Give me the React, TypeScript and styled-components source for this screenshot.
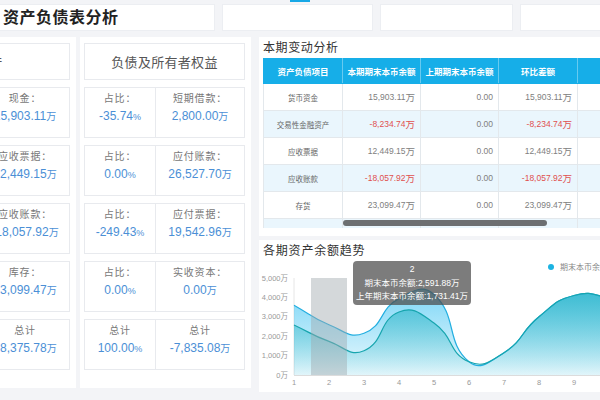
import React from 'react'
import styled, { createGlobalStyle } from 'styled-components'

const GlobalStyle = createGlobalStyle`
  html, body {
    margin: 0;
    padding: 0;
  }
  body {
    background: #f3f4f7;
    font-family: "Liberation Sans", "Noto Sans CJK SC", sans-serif;
  }
`

const Page = styled.div`
  width: 600px;
  height: 400px;
  overflow: hidden;
  background: #f3f4f7;
`
const Strip = styled.div`
  height: 4px;
  display: flex;
`
const StripMark = styled.div`
  margin-left: 290px;
  width: 20px;
  height: 2px;
  background: #18a8e6;
`
const TopBar = styled.div`
  display: flex;
  gap: 7px;
  height: 27px;
  margin-left: -7px;
`
const TitleBox = styled.div`
  width: 222px;
  flex-shrink: 0;
  box-sizing: border-box;
  background: #fff;
  border: 1px solid #eceef2;
  padding-left: 9px;
  font-size: 16px;
  font-weight: bold;
  line-height: 25px;
  letter-spacing: 0.5px;
  color: #222;
`
const BlankBox = styled.div<{ $w: number }>`
  width: ${(p) => p.$w}px;
  flex-shrink: 0;
  box-sizing: border-box;
  background: #fff;
  border: 1px solid #eceef2;
`
const Main = styled.div`
  display: flex;
  gap: 8px;
  margin-top: 6px;
  margin-left: -95px;
`
const LeftGroup = styled.div`
  display: flex;
  gap: 4px;
  flex-shrink: 0;
`
const Panel = styled.div`
  width: 171px;
  height: 351px;
  box-sizing: border-box;
  background: #fff;
  padding: 6px 6px 0 4px;
`
const HeaderBox = styled.div`
  height: 37px;
  box-sizing: border-box;
  border: 1px solid #e8eaee;
  display: flex;
  align-items: center;
  justify-content: center;
  font-size: 13px;
  letter-spacing: 0.3px;
  color: #555;
`
const Rows = styled.div`
  display: flex;
  flex-direction: column;
  gap: 7px;
  margin-top: 7px;
`
const Row = styled.div<{ $cols: string }>`
  display: grid;
  grid-template-columns: ${(p) => p.$cols};
  height: 51px;
  box-sizing: border-box;
  border: 1px solid #e8eaee;
`
const Cell = styled.div`
  text-align: center;
  padding-top: 3px;
  & + & {
    border-left: 1px solid #e8eaee;
  }
`
const Label = styled.div`
  font-size: 10px;
  line-height: 16px;
  letter-spacing: 0.8px;
  color: #777;
`
const Value = styled.div`
  font-size: 12px;
  line-height: 18px;
  color: #4b8fd6;
`
const Unit = styled.span<{ $size: number }>`
  font-size: ${(p) => p.$size}px;
`

const RightCol = styled.div`
  width: 360px;
  flex-shrink: 0;
  display: flex;
  flex-direction: column;
  gap: 4px;
`
const TablePanel = styled.div`
  height: 199px;
  box-sizing: border-box;
  background: #fff;
  padding: 4px 0 0 4px;
`
const SectionTitle = styled.div`
  font-size: 12px;
  line-height: 15px;
  letter-spacing: 0.6px;
  color: #333;
  margin-bottom: 2px;
`
const TableWrap = styled.div`
  position: relative;
  height: 170px;
  overflow: hidden;
`
const TRow = styled.div<{ $alt?: boolean; $head?: boolean }>`
  display: grid;
  grid-template-columns: 79px 78px 78px 79px 79px;
  height: ${(p) => (p.$head ? 26 : 27)}px;
  box-sizing: border-box;
  background: ${(p) => (p.$head ? '#16aee8' : p.$alt ? '#eaf6fd' : '#fff')};
  border-bottom: 1px solid ${(p) => (p.$head ? '#16aee8' : '#e3e8ec')};
  border-left: 1px solid ${(p) => (p.$head ? '#16aee8' : '#e3e8ec')};
`
const TH = styled.div`
  display: flex;
  align-items: center;
  justify-content: center;
  font-size: 8.5px;
  font-weight: bold;
  color: #fff;
  border-right: 1px solid rgba(255, 255, 255, 0.35);
`
const TD = styled.div<{ $num?: boolean; $neg?: boolean }>`
  display: flex;
  align-items: center;
  justify-content: ${(p) => (p.$num ? 'flex-end' : 'center')};
  padding-right: ${(p) => (p.$num ? 5 : 0)}px;
  font-size: ${(p) => (p.$num ? 8.5 : 7.5)}px;
  color: ${(p) => (p.$neg ? '#e0504f' : p.$num ? '#808080' : '#666')};
  border-right: 1px solid #e3e8ec;
`
const ScrollThumb = styled.div`
  position: absolute;
  left: 80px;
  top: 162px;
  width: 204px;
  height: 6px;
  border-radius: 3px;
  background: #6d6f71;
`

const ChartPanel = styled.div`
  height: 152px;
  box-sizing: border-box;
  background: #fff;
`
const ChartTitle = styled.div`
  padding: 3px 0 0 4px;
  font-size: 12px;
  line-height: 16px;
  letter-spacing: 0.8px;
  color: #333;
`
const ChartBox = styled.div`
  position: relative;
  height: 133px;
  overflow: hidden;
`
const Tooltip = styled.div`
  position: absolute;
  left: 94px;
  top: 2px;
  width: 118px;
  height: 44px;
  box-sizing: border-box;
  padding-top: 2px;
  border-radius: 4px;
  background: rgba(78, 78, 78, 0.74);
  color: #fff;
  font-size: 8.5px;
  line-height: 13.5px;
  text-align: center;
  white-space: nowrap;
`

type Item = { label: string; value: string; unit: string }
type PanelData = { title: string; cols: string; rows: [Item, Item][] }

const assets: PanelData = {
  title: '资产',
  cols: '70px 1fr',
  rows: [
    [{ label: '占比：', value: '-20.35', unit: '%' }, { label: '现金：', value: '15,903.11', unit: '万' }],
    [{ label: '占比：', value: '32.44', unit: '%' }, { label: '应收票据：', value: '12,449.15', unit: '万' }],
    [{ label: '占比：', value: '-47.06', unit: '%' }, { label: '应收账款：', value: '-18,057.92', unit: '万' }],
    [{ label: '占比：', value: '60.19', unit: '%' }, { label: '库存：', value: '23,099.47', unit: '万' }],
    [{ label: '总计', value: '100.00', unit: '%' }, { label: '总计', value: '28,375.78', unit: '万' }],
  ],
}

const liabilities: PanelData = {
  title: '负债及所有者权益',
  cols: '70px 1fr',
  rows: [
    [{ label: '占比：', value: '-35.74', unit: '%' }, { label: '短期借款：', value: '2,800.00', unit: '万' }],
    [{ label: '占比：', value: '0.00', unit: '%' }, { label: '应付账款：', value: '26,527.70', unit: '万' }],
    [{ label: '占比：', value: '-249.43', unit: '%' }, { label: '应付票据：', value: '19,542.96', unit: '万' }],
    [{ label: '占比：', value: '0.00', unit: '%' }, { label: '实收资本：', value: '0.00', unit: '万' }],
    [{ label: '总计', value: '100.00', unit: '%' }, { label: '总计', value: '-7,835.08', unit: '万' }],
  ],
}

const StatPanel = ({ data }: { data: PanelData }) => (
  <Panel>
    <HeaderBox>{data.title}</HeaderBox>
    <Rows>
      {data.rows.map((row, i) => (
        <Row key={i} $cols={data.cols}>
          {row.map((item, j) => (
            <Cell key={j}>
              <Label>{item.label}</Label>
              <Value>
                {item.value}
                <Unit $size={item.unit === '%' ? 9 : 10}>{item.unit}</Unit>
              </Value>
            </Cell>
          ))}
        </Row>
      ))}
    </Rows>
  </Panel>
)

const tableRows = [
  ['货币资金', '15,903.11', '15,903.11'],
  ['交易性金融资产', '-8,234.74', '-8,234.74'],
  ['应收票据', '12,449.15', '12,449.15'],
  ['应收账款', '-18,057.92', '-18,057.92'],
  ['存货', '23,099.47', '23,099.47'],
]

const Money = ({ v }: { v: string }) => (
  <TD $num $neg={v.startsWith('-')}>
    {v}
    <Unit $size={9.5}>万</Unit>
  </TD>
)

// chart geometry, in svg coords
const X0 = 35
const STEP = 35
const Y0 = 116
const PER = 97 / 5000
const upper = [3600, 2592, 2150, 3950, 4150, 680, 1150, 3000, 4100, 3950, 3200]
const lower = [2580, 1731, 1250, 3250, 2680, 680, 1150, 3000, 4100, 3950, 3200]

const toPts = (vals: number[]) => vals.map((v, i) => [X0 + i * STEP, Y0 - v * PER])

const smoothLine = (p: number[][], smooth = 0.5) => {
  const n = p.length
  const c0: number[][] = []
  const c1: number[][] = []
  for (let i = 0; i < n; i++) {
    const prev = p[Math.max(i - 1, 0)]
    const next = p[Math.min(i + 1, n - 1)]
    const cur = p[i]
    const vx = next[0] - prev[0]
    const vy = next[1] - prev[1]
    const d0 = Math.hypot(cur[0] - prev[0], cur[1] - prev[1])
    const d1 = Math.hypot(next[0] - cur[0], next[1] - cur[1])
    const r = d0 + d1 === 0 ? 0.5 : d1 / (d0 + d1)
    c1.push([cur[0] + vx * smooth * r, cur[1] + vy * smooth * r])
    c0.push([cur[0] - vx * smooth * (1 - r), cur[1] - vy * smooth * (1 - r)])
  }
  let d = `M${p[0][0]},${p[0][1]}`
  for (let i = 1; i < n; i++) {
    d += ` C${c1[i - 1][0].toFixed(2)},${c1[i - 1][1].toFixed(2)} ${c0[i][0].toFixed(2)},${c0[i][1].toFixed(2)} ${p[i][0]},${p[i][1].toFixed(2)}`
  }
  return d
}

const area = (line: string, p: number[][]) =>
  `${line} L${p[p.length - 1][0]},${Y0} L${p[0][0]},${Y0} Z`

const TrendChart = () => {
  const up = toPts(upper)
  const lo = toPts(lower)
  const upLine = smoothLine(up)
  const loLine = smoothLine(lo)
  const yTicks = [0, 1000, 2000, 3000, 4000, 5000]
  return (
    <ChartBox>
      <svg width="341" height="133">
        <defs>
          <linearGradient id="gUp" x1="0" y1="0" x2="0" y2="1">
            <stop offset="0" stopColor="#3ec3f2" stopOpacity="0.68" />
            <stop offset="1" stopColor="#3ec3f2" stopOpacity="0.1" />
          </linearGradient>
          <linearGradient id="gLo" x1="0" y1="0" x2="0" y2="1">
            <stop offset="0" stopColor="#17adbd" stopOpacity="0.62" />
            <stop offset="1" stopColor="#17adbd" stopOpacity="0.05" />
          </linearGradient>
        </defs>
        <line x1={X0} y1={19} x2={X0} y2={Y0} stroke="#e6e6e6" strokeWidth="1" />
        {yTicks.map((t) => (
          <text
            key={t}
            x={29}
            y={Y0 - t * PER + 2.5}
            textAnchor="end"
            fontSize="7.5"
            fill="#999"
          >
            {t === 0 ? '0' : t.toLocaleString('en-US')}万
          </text>
        ))}
        <path d={area(upLine, up)} fill="url(#gUp)" />
        <path d={area(loLine, lo)} fill="url(#gLo)" />
        <path d={upLine} fill="none" stroke="#22aee0" strokeWidth="1.2" />
        <path d={loLine} fill="none" stroke="#17a5ae" strokeWidth="1.2" />
        <rect x={52} y={19} width={36} height={97} fill="rgba(160,168,172,0.45)" />
        <line x1={X0} y1={Y0 + 0.5} x2={341} y2={Y0 + 0.5} stroke="#dcdcdc" strokeWidth="1" />
        {Array.from({ length: 9 }, (_, i) => (
          <text
            key={i}
            x={X0 + i * STEP}
            y={126}
            textAnchor="middle"
            fontSize="7.5"
            fill="#999"
          >
            {i + 1}
          </text>
        ))}
        <circle cx={292} cy={8} r={3} fill="#1cb3e2" />
        <text x={301} y={11} fontSize="8" fill="#888">
          期末本币余额
        </text>
      </svg>
      <Tooltip>
        <div>2</div>
        <div>期末本币余额:2,591.88万</div>
        <div>上年期末本币余额:1,731.41万</div>
      </Tooltip>
    </ChartBox>
  )
}

export default function App() {
  return (
    <Page>
      <GlobalStyle />
      <Strip>
        <StripMark />
      </Strip>
      <TopBar>
        <TitleBox>资产负债表分析</TitleBox>
        <BlankBox $w={151} />
        <BlankBox $w={133} />
        <BlankBox $w={120} />
      </TopBar>
      <Main>
        <LeftGroup>
          <StatPanel data={assets} />
          <StatPanel data={liabilities} />
        </LeftGroup>
        <RightCol>
          <TablePanel>
            <SectionTitle>本期变动分析</SectionTitle>
            <TableWrap>
              <TRow $head>
                <TH>资产负债项目</TH>
                <TH>本期期末本币余额</TH>
                <TH>上期期末本币余额</TH>
                <TH>环比差额</TH>
                <TH />
              </TRow>
              {tableRows.map((r, i) => (
                <TRow key={r[0]} $alt={i % 2 === 1}>
                  <TD>{r[0]}</TD>
                  <Money v={r[1]} />
                  <TD $num>0.00</TD>
                  <Money v={r[2]} />
                  <TD />
                </TRow>
              ))}
              <TRow $alt>
                <TD />
                <TD />
                <TD />
                <TD />
                <TD />
              </TRow>
              <ScrollThumb />
            </TableWrap>
          </TablePanel>
          <ChartPanel>
            <ChartTitle>各期资产余额趋势</ChartTitle>
            <TrendChart />
          </ChartPanel>
        </RightCol>
      </Main>
    </Page>
  )
}
